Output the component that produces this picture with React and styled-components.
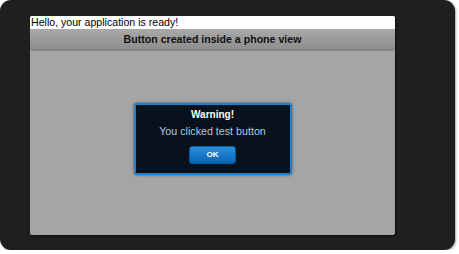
import React from "react";
import styled, { createGlobalStyle } from "styled-components";

const Global = createGlobalStyle`
  html, body {
    margin: 0;
    padding: 0;
    background: #ffffff;
  }
  body {
    font-family: "Liberation Sans", Arial, sans-serif;
  }
`;

const Page = () => {
  return (
    <>
      <Global />
      <Shell>
        <Screen>
          <Status>Hello, your application is ready!</Status>
          <Toolbar>Button created inside a phone view</Toolbar>
          <Body>
            <Dialog>
              <Title>Warning!</Title>
              <Message>You clicked test button</Message>
              <OkButton>OK</OkButton>
            </Dialog>
          </Body>
        </Screen>
      </Shell>
    </>
  );
};

const Shell = styled.div`
  width: 455px;
  height: 250px;
  box-sizing: border-box;
  background: #1f1f1f;
  border-radius: 11px;
  padding: 16px 60px 15px 30px;
  box-shadow: 1px 1px 2px rgba(0, 0, 0, 0.35);
  display: flex;
`;

const Screen = styled.div`
  flex: 1;
  display: flex;
  flex-direction: column;
  background: #a5a5a5;
  border-radius: 2px;
  overflow: hidden;
  box-shadow: 1px 1px 2px rgba(0, 0, 0, 0.6);
`;

const Status = styled.div`
  background: #ffffff;
  color: #000;
  font-size: 10.6px;
  height: 13px;
  line-height: 13px;
  padding-left: 1px;
  white-space: nowrap;
`;

const Toolbar = styled.div`
  height: 20px;
  line-height: 20px;
  text-align: center;
  font-weight: bold;
  font-size: 10.6px;
  color: #111;
  background: linear-gradient(#a9a9a9, #8e8e8e);
  border-radius: 3px;
  border-bottom: 1px solid #7d7d7d;
  box-shadow: 0 1px 1px rgba(0, 0, 0, 0.2);
`;

const Body = styled.div`
  flex: 1;
  display: flex;
  align-items: center;
  justify-content: center;
  padding-bottom: 8px;
`;

const Dialog = styled.div`
  width: 158px;
  height: 72px;
  box-sizing: border-box;
  background: #07121c;
  border: 2px solid #1f7fcf;
  border-radius: 3px;
  box-shadow: 0 0 3px rgba(0, 0, 0, 0.5);
  display: flex;
  flex-direction: column;
  align-items: center;
  padding-top: 4px;
`;

const Title = styled.div`
  color: #ffffff;
  font-weight: bold;
  font-size: 10px;
  line-height: 12px;
`;

const Message = styled.div`
  color: #b4c6d6;
  font-size: 10.7px;
  line-height: 14px;
  margin-top: 3px;
`;

const OkButton = styled.button`
  margin-top: 8px;
  width: 47px;
  height: 18px;
  padding: 0;
  border: 1px solid #045a9e;
  border-radius: 3px;
  background: linear-gradient(#2a8fe0, #0864b3);
  color: #ffffff;
  font-family: "Liberation Sans", Arial, sans-serif;
  font-weight: bold;
  font-size: 8px;
`;

export default Page;
